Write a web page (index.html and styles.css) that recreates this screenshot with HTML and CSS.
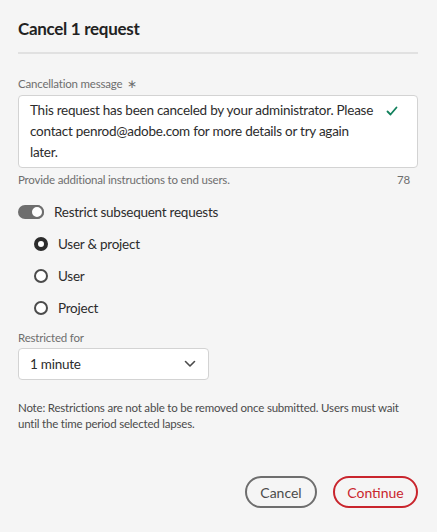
FILE: index.html
```html
<!DOCTYPE html>
<html>
<head>
<meta charset="utf-8">
<link rel="stylesheet" href="styles.css">
</head>
<body>
<div class="dialog">
  <h1 class="title">Cancel 1 request</h1>
  <div class="divider"></div>
  <div class="field">
    <div class="label">Cancellation message <span class="req">∗</span></div>
    <div class="textarea">
      <div class="ta-text">This request has been canceled by your administrator. Please contact penrod@adobe.com for more details or try again later.</div>
      <svg class="check" width="12" height="12" viewBox="0 0 12 12"><path d="M1.5 6.5 L4.5 9.5 L10.5 2.5" fill="none" stroke="#12805c" stroke-width="1.8" stroke-linecap="round" stroke-linejoin="round"/></svg>
    </div>
    <div class="help"><span>Provide additional instructions to end users.</span><span>78</span></div>
  </div>
  <div class="switch-row">
    <span class="switch"><span class="knob"></span></span>
    <span class="switch-label">Restrict subsequent requests</span>
  </div>
  <div class="radios">
    <div class="radio-row"><span class="radio checked"></span><span>User &amp; project</span></div>
    <div class="radio-row"><span class="radio"></span><span>User</span></div>
    <div class="radio-row"><span class="radio"></span><span>Project</span></div>
  </div>
  <div class="label label2">Restricted for</div>
  <div class="select">
    <span>1 minute</span>
    <svg width="12" height="8" viewBox="0 0 12 8"><path d="M1.5 1.5 L6 6 L10.5 1.5" fill="none" stroke="#4b4b4b" stroke-width="1.6" stroke-linecap="round" stroke-linejoin="round"/></svg>
  </div>
  <p class="note">Note: Restrictions are not able to be removed once submitted. Users must wait until the time period selected lapses.</p>
  <div class="buttons">
    <button class="btn btn-secondary">Cancel</button>
    <button class="btn btn-primary">Continue</button>
  </div>
</div>
</body>
</html>
```
FILE: styles.css
```css
html, body {
  margin: 0;
  padding: 0;
  background: #f5f5f5;
}
body {
  font-family: "Lato", "Noto Sans", sans-serif;
  color: #2c2c2c;
}
.dialog {
  padding: 16px 19px 0 18px;
}
.title {
  margin: 0;
  font-size: 17px;
  letter-spacing: -0.3px;
  line-height: 26px;
  font-weight: 700;
  color: #222;
}
.divider {
  height: 2px;
  background: #e1e1e1;
  margin-top: 10px;
}
.field {
  margin-top: 22px;
}
.label {
  font-size: 11.5px;
  letter-spacing: -0.2px;
  line-height: 16px;
  color: #6e6e6e;
}
.req {
  color: #6e6e6e;
  margin-left: 2px;
}
.textarea {
  margin-top: 3px;
  background: #fff;
  border: 1px solid #d3d3d3;
  border-radius: 4px;
  padding: 4px 19px 4px 11px;
  display: flex;
  align-items: flex-start;
  gap: 8px;
}
.ta-text {
  flex: 1;
  font-size: 13.5px;
  letter-spacing: -0.25px;
  line-height: 21px;
  color: #2c2c2c;
}
.check {
  margin-top: 5px;
}
.help {
  display: flex;
  justify-content: space-between;
  font-size: 11.5px;
  letter-spacing: -0.2px;
  line-height: 16px;
  color: #6e6e6e;
  margin-top: 4px;
  padding-right: 8px;
}
.switch-row {
  display: flex;
  align-items: center;
  margin-top: 12px;
  height: 24px;
}
.switch {
  width: 26px;
  height: 14px;
  border-radius: 7px;
  background: #6e6e6e;
  position: relative;
  margin-right: 10px;
}
.knob {
  position: absolute;
  right: 0;
  top: 0;
  width: 14px;
  height: 14px;
  box-sizing: border-box;
  border-radius: 50%;
  background: #fff;
  border: 2px solid #6e6e6e;
}
.switch-label {
  font-size: 13.5px;
  letter-spacing: -0.25px;
  color: #2c2c2c;
}
.radios {
  padding-left: 16px;
  margin-top: 8px;
  display: flex;
  flex-direction: column;
  gap: 8px;
}
.radio-row {
  display: flex;
  align-items: center;
  height: 24px;
  font-size: 13.5px;
  letter-spacing: -0.25px;
  color: #2c2c2c;
}
.radio {
  width: 14px;
  height: 14px;
  box-sizing: border-box;
  border-radius: 50%;
  border: 2px solid #4b4b4b;
  background: #fff;
  margin-right: 10px;
}
.radio.checked {
  border: 4px solid #2c2c2c;
}
.label2 {
  margin-top: 10px;
}
.select {
  margin-top: 2px;
  width: 191px;
  height: 32px;
  box-sizing: border-box;
  background: #fff;
  border: 1px solid #d3d3d3;
  border-radius: 4px;
  display: flex;
  align-items: center;
  justify-content: space-between;
  padding: 0 12px 0 11px;
  font-size: 13.5px;
  letter-spacing: -0.25px;
  color: #2c2c2c;
}
.note {
  margin: 20px 0 0;
  font-size: 11.5px;
  letter-spacing: -0.2px;
  line-height: 16px;
  color: #4b4b4b;
}
.buttons {
  display: flex;
  justify-content: flex-end;
  gap: 16px;
  margin-top: 44px;
}
.btn {
  height: 32px;
  box-sizing: border-box;
  border-radius: 16px;
  background: transparent;
  border: 2px solid;
  font-family: inherit;
  font-size: 14px;
  font-weight: 400;
  padding: 0 10px;
}
.btn-secondary {
  border-color: #6e6e6e;
  color: #4b4b4b;
  width: 72px;
}
.btn-primary {
  border-color: #c9252d;
  color: #c9252d;
  width: 85px;
}
```
